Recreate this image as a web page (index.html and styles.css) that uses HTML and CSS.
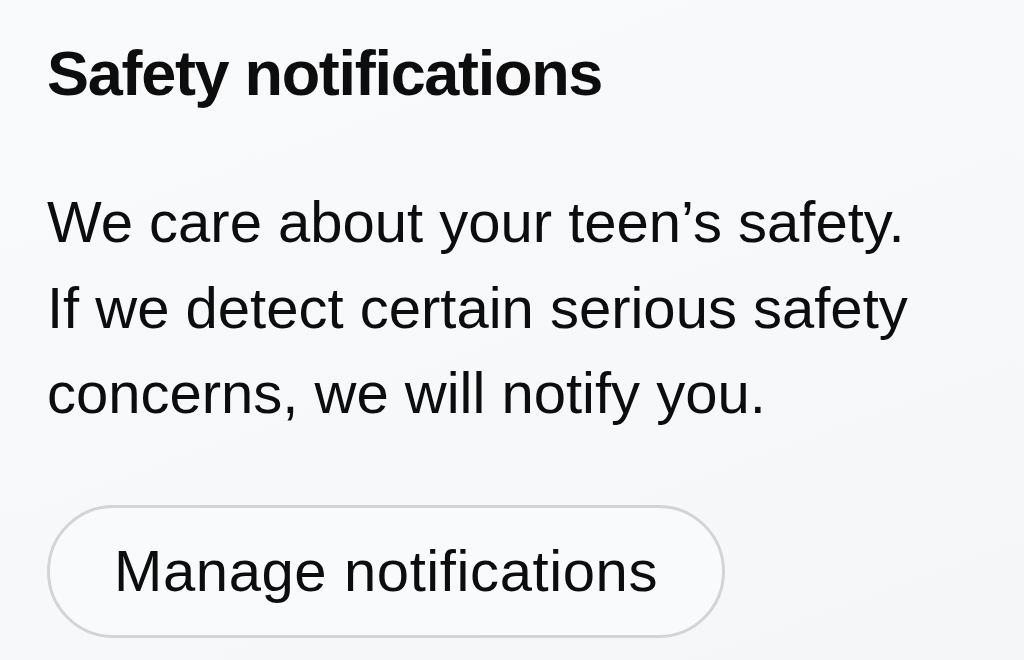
FILE: index.html
```html
<!DOCTYPE html>
<html lang="en">
<head>
<meta charset="utf-8">
<title>Safety notifications</title>
<link rel="stylesheet" href="styles.css">
</head>
<body>
<main class="card">
  <h1 class="title">Safety notifications</h1>
  <p class="desc">We care about your teen’s safety.<br>If we detect certain serious safety<br>concerns, we will notify you.</p>
  <button class="btn" type="button">Manage notifications</button>
</main>
</body>
</html>
```

FILE: styles.css
```css
html, body {
  margin: 0;
  padding: 0;
}
body {
  width: 1024px;
  height: 660px;
  overflow: hidden;
  background: linear-gradient(160deg, #f9fafc 0%, #f7f8fa 60%, #f5f6f8 100%);
  font-family: "Liberation Sans", Arial, sans-serif;
  color: #0d0d0d;
}
.card {
  display: flex;
  flex-direction: column;
  align-items: flex-start;
  padding: 35px 0 0 47px;
}
.title {
  margin: 0;
  font-size: 63px;
  line-height: 76px;
  font-weight: 700;
  letter-spacing: -1.3px;
}
.desc {
  margin: 68px 0 0 0;
  font-size: 58px;
  line-height: 85.5px;
  letter-spacing: 0;
  font-weight: 400;
}
.btn {
  margin-top: 69px;
  box-sizing: border-box;
  height: 133px;
  padding: 0 64px;
  border: 3px solid #d3d4d6;
  border-radius: 67px;
  background: #f9fafc;
  font-family: "Liberation Sans", Arial, sans-serif;
  font-size: 58px;
  line-height: 58px;
  letter-spacing: 0.6px;
  color: #0d0d0d;
  display: flex;
  align-items: center;
}
```
